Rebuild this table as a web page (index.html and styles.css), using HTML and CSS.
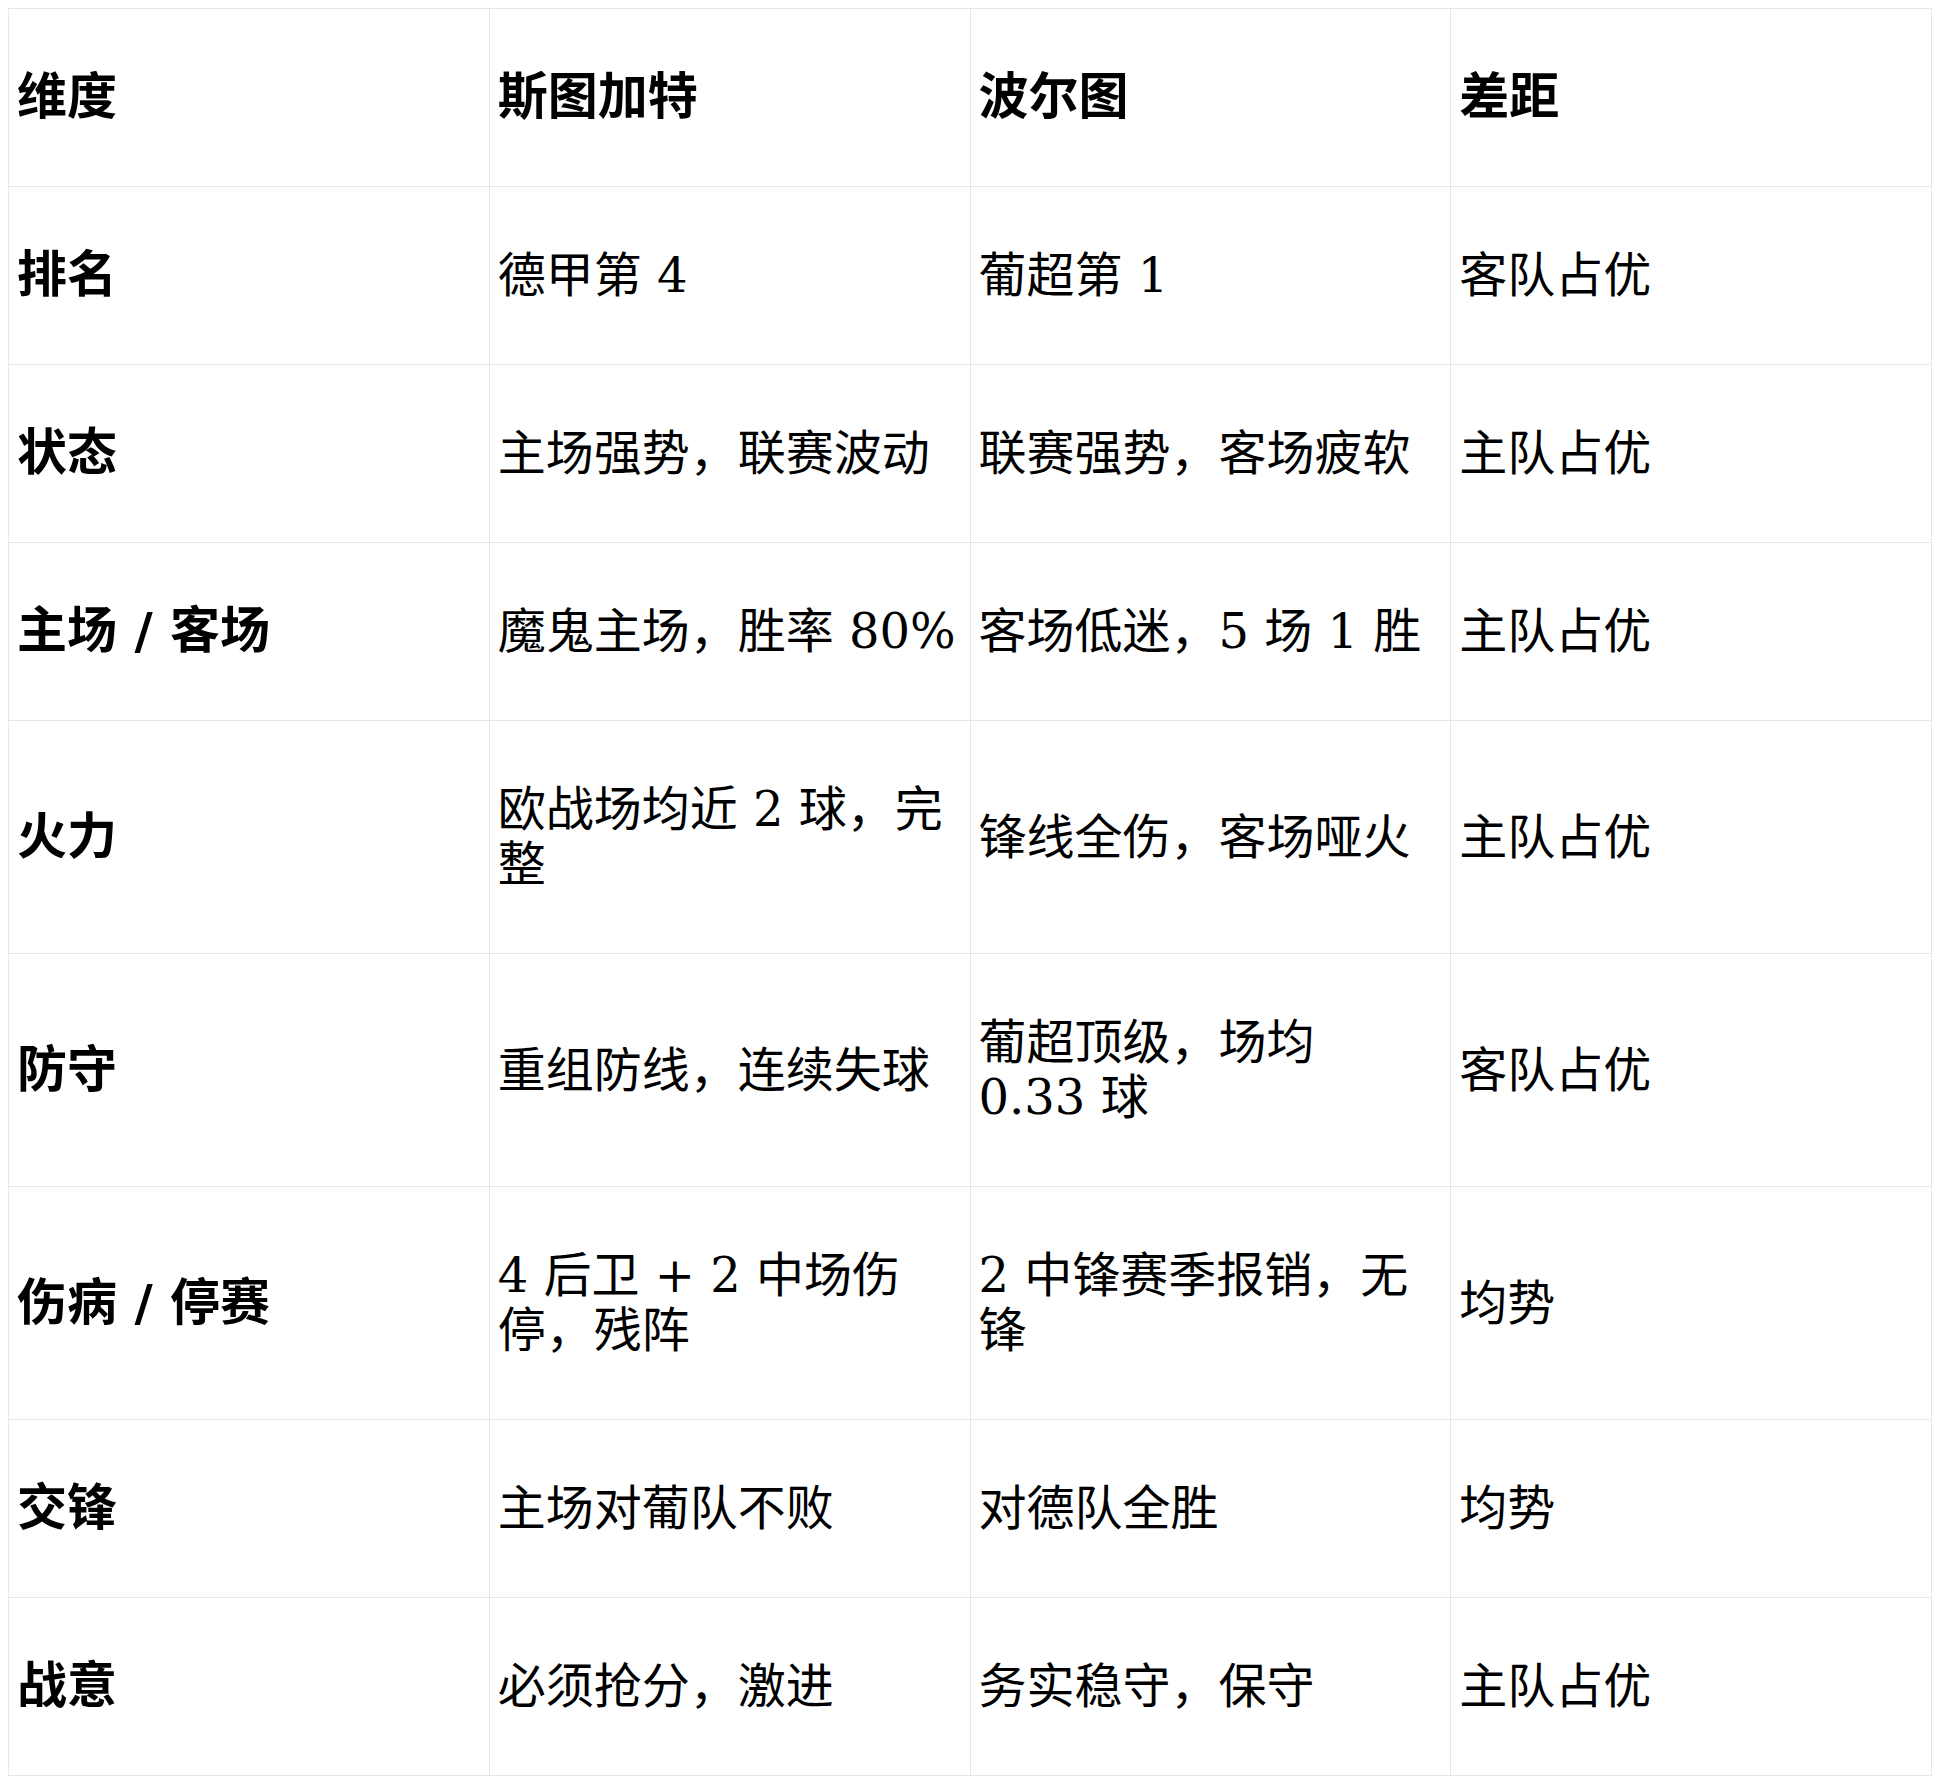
FILE: index.html
```html
<!DOCTYPE html>
<html lang="zh">
<head>
<meta charset="utf-8">
<link rel="stylesheet" href="styles.css">
</head>
<body>
<table class="cmp">
  <thead>
    <tr><th>维度</th><th>斯图加特</th><th>波尔图</th><th>差距</th></tr>
  </thead>
  <tbody>
    <tr><th>排名</th><td>德甲第 4</td><td>葡超第 1</td><td>客队占优</td></tr>
    <tr><th>状态</th><td>主场强势，联赛波动</td><td>联赛强势，客场疲软</td><td>主队占优</td></tr>
    <tr><th>主场 / 客场</th><td>魔鬼主场，胜率 80%</td><td>客场低迷，5 场 1 胜</td><td>主队占优</td></tr>
    <tr><th>火力</th><td>欧战场均近 2 球，完整</td><td>锋线全伤，客场哑火</td><td>主队占优</td></tr>
    <tr><th>防守</th><td>重组防线，连续失球</td><td>葡超顶级，场均<br>0.33 球</td><td>客队占优</td></tr>
    <tr><th>伤病 / 停赛</th><td>4 后卫 + 2 中场伤停，残阵</td><td>2 中锋赛季报销，无锋</td><td>均势</td></tr>
    <tr><th>交锋</th><td>主场对葡队不败</td><td>对德队全胜</td><td>均势</td></tr>
    <tr><th>战意</th><td>必须抢分，激进</td><td>务实稳守，保守</td><td>主队占优</td></tr>
  </tbody>
</table>
</body>
</html>
```
FILE: styles.css
```css
body {
  margin: 8px;
  background: #ffffff;
  color: #000000;
}
.cmp {
  width: 100%;
  border-collapse: collapse;
  table-layout: fixed;
  font-size: 48px;
}
.cmp th,
.cmp td {
  border: 1px solid #e5e7eb;
  padding: 61px 8px;
  text-align: left;
  vertical-align: middle;
  line-height: 55px;
}
.cmp td {
  font-family: "DejaVu Serif", "Noto Sans CJK SC", serif;
  font-weight: normal;
}
.cmp th {
  font-family: "DejaVu Sans", "Noto Sans CJK SC", sans-serif;
  font-size: 50px;
  font-weight: bold;
}
```
